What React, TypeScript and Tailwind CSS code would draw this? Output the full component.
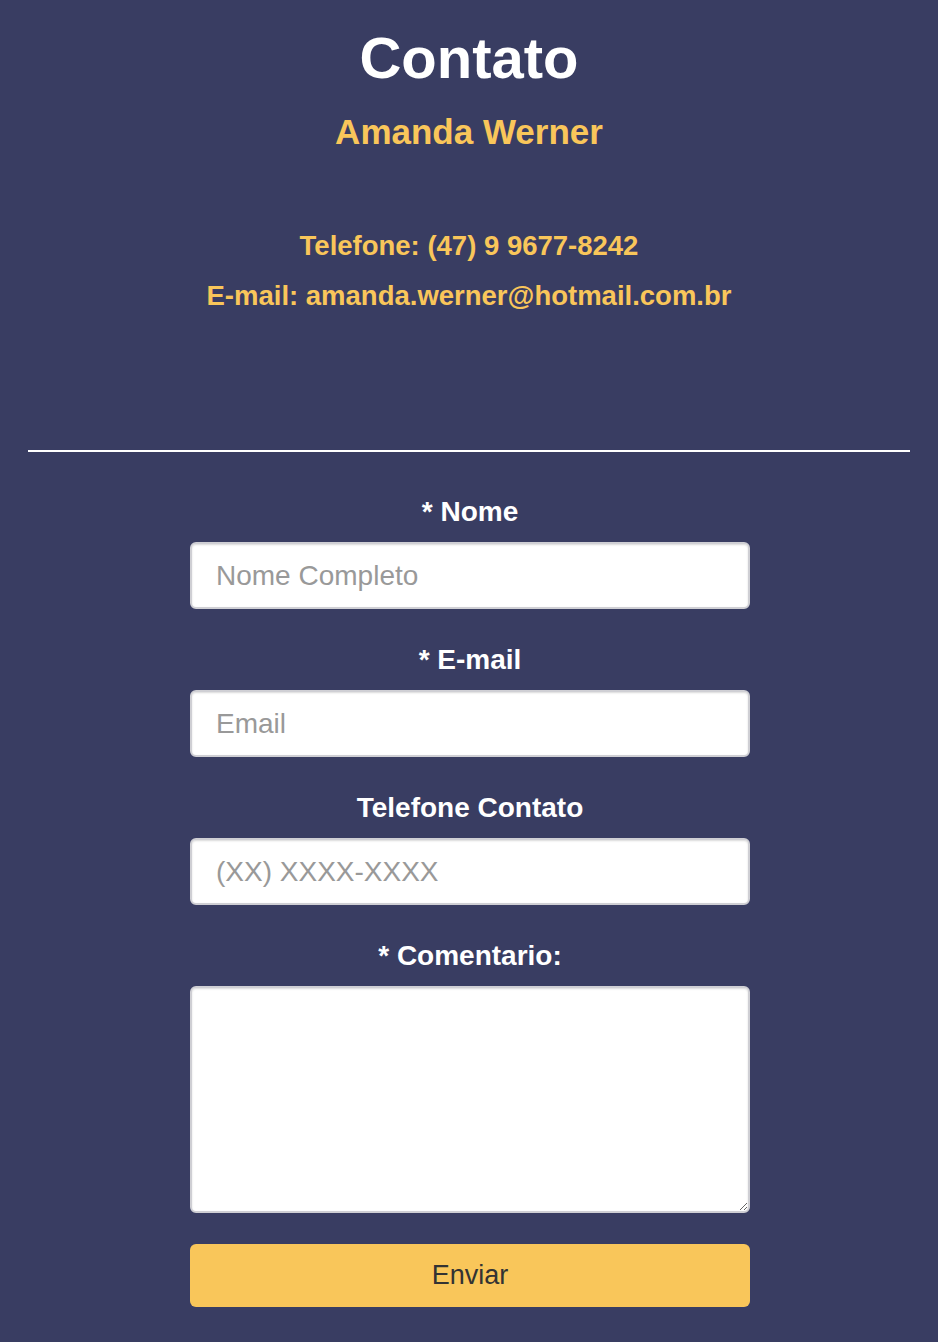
import { useState } from "react";

export default function App() {
  const [form, setForm] = useState({
    nome: "",
    email: "",
    telefone: "",
    comentario: "",
  });

  const campo =
    "block w-full h-[67px] rounded-md border-2 border-[#cfcfd4] bg-white px-[24px] text-[28px] text-[#333] placeholder:text-[#999] shadow-[inset_0_1px_2px_rgba(0,0,0,0.15)] outline-none";
  const rotulo = "block text-center text-[28px] font-bold leading-[30px] text-white";

  return (
    <main
      className="min-h-screen bg-[#393d62] pb-[35px]"
      style={{ fontFamily: '"Liberation Sans", Arial, sans-serif' }}
    >
      <h1 className="pt-[29px] text-center text-[58px] font-bold leading-none text-white">
        Contato
      </h1>
      <h2 className="mt-[27px] text-center text-[35px] font-bold leading-none text-[#f9c65a]">
        Amanda Werner
      </h2>

      <div className="mt-[72px] text-center text-[27.5px] font-bold leading-[50px] text-[#f9c65a]">
        <p>Telefone: (47) 9 9677-8242</p>
        <p>E-mail: amanda.werner@hotmail.com.br</p>
      </div>

      <hr className="mx-[28px] mt-[129px] border-0 border-t-2 border-white" />

      <form
        className="mx-auto w-[562px] pl-[2px]"
        onSubmit={(e) => e.preventDefault()}
      >
        <label className={rotulo + " mt-[45px] mb-[15px]"}>* Nome</label>
        <input
          className={campo}
          placeholder="Nome Completo"
          value={form.nome}
          onChange={(e) => setForm({ ...form, nome: e.target.value })}
        />

        <label className={rotulo + " mt-[36px] mb-[15px]"}>* E-mail</label>
        <input
          className={campo}
          placeholder="Email"
          value={form.email}
          onChange={(e) => setForm({ ...form, email: e.target.value })}
        />

        <label className={rotulo + " mt-[36px] mb-[15px]"}>Telefone Contato</label>
        <input
          className={campo}
          placeholder="(XX) XXXX-XXXX"
          value={form.telefone}
          onChange={(e) => setForm({ ...form, telefone: e.target.value })}
        />

        <label className={rotulo + " mt-[36px] mb-[15px]"}>* Comentario:</label>
        <textarea
          className="block h-[227px] w-full rounded-md border-2 border-[#cfcfd4] bg-white px-[24px] py-[12px] text-[28px] text-[#333] shadow-[inset_0_1px_2px_rgba(0,0,0,0.15)] outline-none"
          value={form.comentario}
          onChange={(e) => setForm({ ...form, comentario: e.target.value })}
        />

        <button
          type="submit"
          className="mt-[31px] block h-[63px] w-full rounded-md bg-[#f9c65a] text-[27px] text-[#333]"
        >
          Enviar
        </button>
      </form>
    </main>
  );
}
